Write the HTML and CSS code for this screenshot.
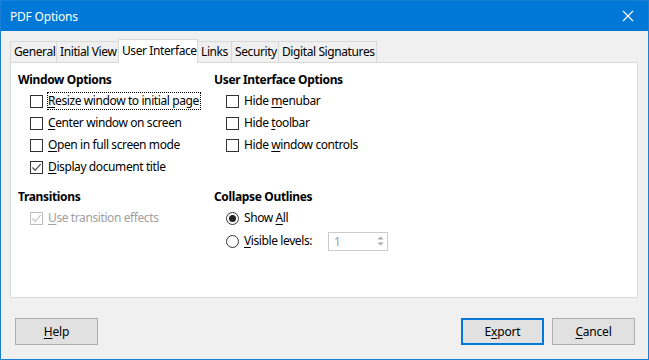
FILE: index.html
```html
<!DOCTYPE html>
<html>
<head>
<meta charset="utf-8">
<link rel="stylesheet" href="styles.css">
</head>
<body>
<div class="window">
  <div class="titlebar">
    <span class="title">PDF Options</span>
    <svg class="close" width="12" height="12" viewBox="0 0 12 12"><path d="M1 1L11 11M11 1L1 11" stroke="#fff" stroke-width="1.2" fill="none"/></svg>
  </div>
  <div class="content">
    <div class="tabs">
      <div class="tab t-general">General</div>
      <div class="tab t-initial">Initial View</div>
      <div class="tab t-ui active">User Interface</div>
      <div class="tab t-links">Links</div>
      <div class="tab t-security">Security</div>
      <div class="tab t-digital">Digital Signatures</div>
    </div>
    <div class="panel">
      <div class="col col-left">
        <div class="group">
          <div class="heading">Window Options</div>
          <div class="row"><span class="cb"></span><span class="label focus"><u>R</u>esize window to initial page</span></div>
          <div class="row"><span class="cb"></span><span class="label"><u>C</u>enter window on screen</span></div>
          <div class="row"><span class="cb"></span><span class="label"><u>O</u>pen in full screen mode</span></div>
          <div class="row"><span class="cb checked"><svg width="11" height="11" viewBox="0 0 11 11"><path d="M1.5 5.5L4.2 8.3L9.6 2.2" stroke="#333" stroke-width="1.1" fill="none"/></svg></span><span class="label"><u>D</u>isplay document title</span></div>
        </div>
        <div class="group group2">
          <div class="heading">Transitions</div>
          <div class="row disabled"><span class="cb checked"><svg width="11" height="11" viewBox="0 0 11 11"><path d="M1.5 5.5L4.2 8.3L9.6 2.2" stroke="#bcbcbc" stroke-width="1.1" fill="none"/></svg></span><span class="label"><u>U</u>se transition effects</span></div>
        </div>
      </div>
      <div class="col col-right">
        <div class="group">
          <div class="heading">User Interface Options</div>
          <div class="row"><span class="cb"></span><span class="label">Hide <u>m</u>enubar</span></div>
          <div class="row"><span class="cb"></span><span class="label">Hide <u>t</u>oolbar</span></div>
          <div class="row"><span class="cb"></span><span class="label">Hide <u>w</u>indow controls</span></div>
        </div>
        <div class="group group2b">
          <div class="heading">Collapse Outlines</div>
          <div class="row"><span class="radio on"><span class="dot"></span></span><span class="label">Show <u>A</u>ll</span></div>
          <div class="row row-spin"><span class="radio"></span><span class="label label-fixed"><u>V</u>isible levels:</span>
            <span class="spin"><span class="spin-val">1</span><span class="spin-btns"><svg width="7" height="14" viewBox="0 0 7 14"><path d="M0.5 5.5L3.5 2.5L6.5 5.5Z" fill="#a8a8a8"/><path d="M0.5 8.5L3.5 11.5L6.5 8.5Z" fill="#a8a8a8"/></svg></span></span>
          </div>
        </div>
      </div>
    </div>
    <div class="buttons">
      <div class="btn"><u>H</u>elp</div>
      <div class="spacer"></div>
      <div class="btn default">E<u>x</u>port</div>
      <div class="btn"><u>C</u>ancel</div>
    </div>
  </div>
</div>
</body>
</html>
```
FILE: styles.css
```css
html, body {
  margin: 0;
  padding: 0;
  background: #f0f0f0;
}
body {
  font-family: "Noto Sans", "DejaVu Sans", sans-serif;
  font-size: 12px;
  color: #000;
}
.window {
  box-sizing: border-box;
  width: 649px;
  height: 360px;
  border: 1px solid #1a7fd6;
  background: #f0f0f0;
  display: flex;
  flex-direction: column;
}
.titlebar {
  height: 30px;
  background: #0078d7;
  color: #fff;
  display: flex;
  align-items: center;
  padding: 0 10px 0 9px;
  flex: none;
}
.title {
  flex: 1;
  font-size: 12px;
  letter-spacing: -0.2px;
}
.close {
  margin-right: 4px;
}
.content {
  flex: 1;
  padding: 8px 10px 0 9px;
  display: flex;
  flex-direction: column;
}
.tabs {
  display: flex;
  align-items: flex-end;
  height: 23px;
  position: relative;
  z-index: 1;
}
.tab {
  box-sizing: border-box;
  height: 21px;
  border: 1px solid #d9d9d9;
  border-bottom: none;
  margin-right: -1px;
  background: #f0f0f0;
  line-height: 19px;
  padding-left: 3px;
  white-space: nowrap;
  letter-spacing: -0.4px;
}
.tab.active {
  height: 24px;
  margin-bottom: -1px;
  background: #fff;
  line-height: 22px;
  position: relative;
  z-index: 2;
}
.t-general { width: 47px; }
.t-initial { width: 63px; }
.t-ui { width: 80px; }
.t-links { width: 35px; }
.t-security { width: 48px; }
.t-digital { width: 99px; }
.panel {
  box-sizing: border-box;
  height: 236px;
  background: #fff;
  border: 1px solid #d9d9d9;
  padding: 7px 0 0 7px;
  display: grid;
  grid-template-columns: 196px 1fr;
}
.heading {
  font-weight: bold;
  height: 20px;
  line-height: 20px;
  letter-spacing: -0.35px;
}
.row {
  height: 22px;
  display: flex;
  align-items: center;
  padding-left: 12px;
  letter-spacing: -0.4px;
}
.group2 {
  margin-top: 9px;
}
.group2b {
  margin-top: 31px;
}
.cb {
  box-sizing: border-box;
  width: 13px;
  height: 13px;
  border: 1px solid #333;
  background: #fff;
  flex: none;
  display: flex;
  align-items: center;
  justify-content: center;
}
.disabled .cb {
  border-color: #bcbcbc;
}
.disabled .label {
  color: #a0a0a0;
}
.label {
  margin-left: 4px;
  line-height: 16px;
  border: 1px solid transparent;
  padding: 0 1px 0 0;
  white-space: nowrap;
}
.label.focus {
  border: 1px dotted #000;
}
.radio {
  box-sizing: border-box;
  width: 13px;
  height: 13px;
  border: 1px solid #333;
  border-radius: 50%;
  background: #fff;
  flex: none;
  display: flex;
  align-items: center;
  justify-content: center;
}
.radio .dot {
  width: 7px;
  height: 7px;
  border-radius: 50%;
  background: #222;
}
.row-spin {
  height: 24px;
}
.label-fixed {
  width: 82px;
}
.spin {
  box-sizing: border-box;
  width: 60px;
  height: 19px;
  border: 1px solid #cccccc;
  background: #fff;
  display: flex;
  align-items: center;
}
.spin-val {
  flex: 1;
  color: #a0a0a0;
  padding-left: 5px;
  line-height: 17px;
}
.spin-btns {
  width: 14px;
  height: 17px;
  display: flex;
  align-items: center;
  justify-content: center;
}
.buttons {
  display: flex;
  margin-top: 20px;
  padding-left: 5px;
  padding-right: 3px;
}
.spacer {
  flex: 1;
}
.btn {
  box-sizing: border-box;
  width: 83px;
  height: 27px;
  border: 1px solid #adadad;
  background: #e1e1e1;
  display: flex;
  align-items: center;
  justify-content: center;
  letter-spacing: -0.2px;
}
.btn.default {
  border: 2px solid #0078d7;
  margin-right: 8px;
}
u {
  text-decoration: underline;
  text-underline-offset: 2px;
}
```
